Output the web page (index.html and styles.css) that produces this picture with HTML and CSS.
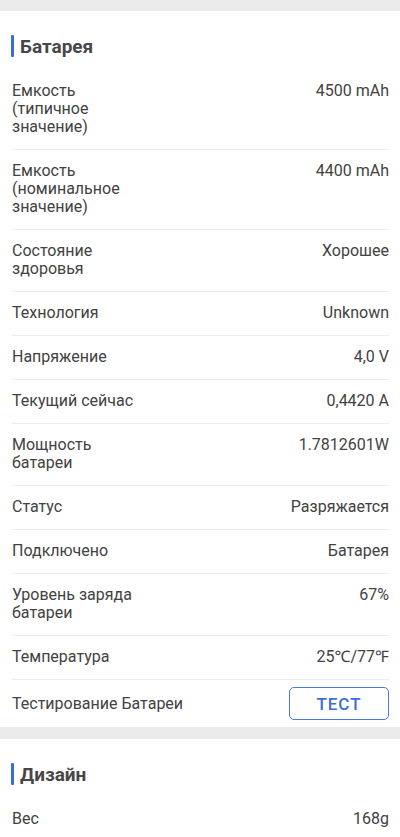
FILE: index.html
```html
<!DOCTYPE html>
<html lang="ru">
<head>
<meta charset="utf-8">
<link rel="stylesheet" href="styles.css">
</head>
<body>
<div class="page">
  <section class="card">
    <h2 class="card-title">Батарея</h2>
    <div class="row"><div class="label">Емкость (типичное значение)</div><div class="value">4500 mAh</div></div>
    <div class="row"><div class="label">Емкость (номинальное значение)</div><div class="value">4400 mAh</div></div>
    <div class="row"><div class="label">Состояние здоровья</div><div class="value">Хорошее</div></div>
    <div class="row"><div class="label">Технология</div><div class="value">Unknown</div></div>
    <div class="row"><div class="label">Напряжение</div><div class="value">4,0 V</div></div>
    <div class="row"><div class="label">Текущий сейчас</div><div class="value">0,4420 A</div></div>
    <div class="row"><div class="label">Мощность батареи</div><div class="value">1.7812601W</div></div>
    <div class="row"><div class="label">Статус</div><div class="value">Разряжается</div></div>
    <div class="row"><div class="label">Подключено</div><div class="value">Батарея</div></div>
    <div class="row"><div class="label">Уровень заряда батареи</div><div class="value">67%</div></div>
    <div class="row"><div class="label">Температура</div><div class="value">25℃/77℉</div></div>
    <div class="row row-action"><div class="label label-wide">Тестирование Батареи</div><button class="test-btn">ТЕСТ</button></div>
  </section>
  <section class="card">
    <h2 class="card-title">Дизайн</h2>
    <div class="row"><div class="label">Вес</div><div class="value">168g</div></div>
  </section>
</div>
</body>
</html>
```
FILE: styles.css
```css
html, body {
  margin: 0;
  padding: 0;
  background: #ebebeb;
}
body {
  font-family: Roboto, "Noto Sans", sans-serif;
  color: #424242;
  width: 400px;
  height: 837px;
  overflow: hidden;
}
.page {
  padding-top: 11px;
  display: flex;
  flex-direction: column;
  gap: 12px;
}
.card {
  background: #fff;
  padding: 0 11px 0 12px;
}
.card-title {
  margin: 0;
  padding: 25px 0 12px 8px;
  height: 22px;
  line-height: 22px;
  font-size: 19px;
  font-weight: 700;
  color: #474747;
  position: relative;
}
.card-title::before {
  content: "";
  position: absolute;
  left: -1px;
  top: 24px;
  width: 3px;
  height: 22px;
  background: #3b6be0;
  border-radius: 1px;
}
.row {
  display: flex;
  justify-content: space-between;
  align-items: flex-start;
  padding: 12px 0 13px;
  border-bottom: 1px solid #ececec;
  font-size: 16px;
  line-height: 18px;
}
.row:last-child {
  border-bottom: none;
}
.label {
  width: 136px;
}
.label-wide {
  width: auto;
}
.value {
  text-align: right;
}
.row-action {
  padding: 7px 0 7px;
  align-items: center;
}
.test-btn {
  width: 100px;
  height: 33px;
  border: 1px solid #4a79e2;
  border-radius: 5px;
  background: #fff;
  color: #3b6be0;
  font-family: Roboto, "Noto Sans", sans-serif;
  font-size: 17px;
  font-weight: 500;
  letter-spacing: 1px;
  padding: 0;
}
```
